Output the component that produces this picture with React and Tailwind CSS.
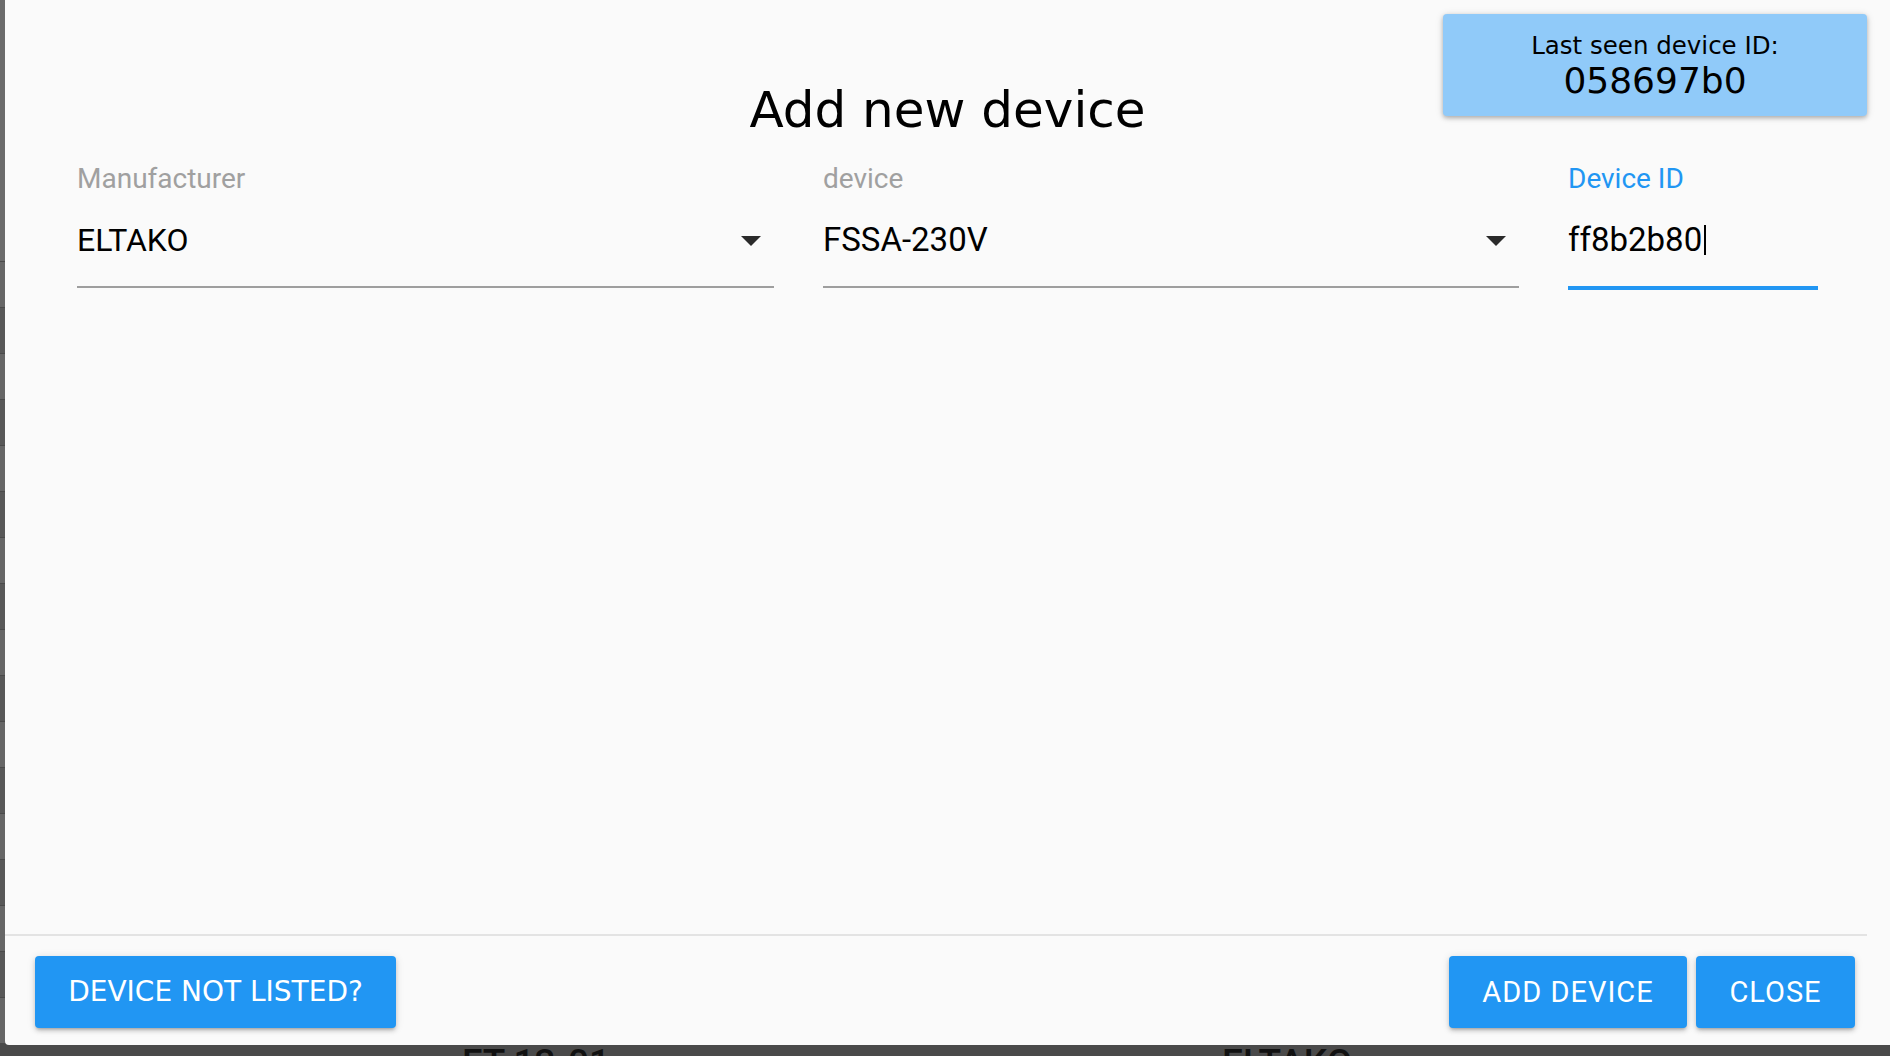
import React from "react";

const dejavu = { fontFamily: '"DejaVu Sans", "Liberation Sans", sans-serif' };
const roboto = { fontFamily: 'Roboto, "Liberation Sans", sans-serif' };

function Arrow() {
  return (
    <svg width="20" height="10" viewBox="0 0 20 10" className="shrink-0">
      <polygon points="0,0 20,0 10,10" fill="#2a2a2a" />
    </svg>
  );
}

export default function App() {
  const rows = Array.from({ length: 17 });
  return (
    <div className="relative w-[1890px] h-[1056px] overflow-hidden bg-[#4a4a4a]">
      {/* page behind the modal */}
      <div className="flex flex-col w-full">
        <div className="h-[261px] bg-[#6b6b6b]" />
        {rows.map((_, i) => (
          <div
            key={i}
            className={
              "h-[46px] border-t border-[#4a4a4a] " +
              (i % 2 === 0 ? "bg-[#666666]" : "bg-[#585858]")
            }
          />
        ))}
        <div className="relative h-[40px] bg-[#4a4a4a] text-[37px] font-medium text-[#111]" style={roboto}>
          <div className="flex pt-[2px]">
            <span className="ml-[462px] leading-[36px]">FT-13-01</span>
            <span className="ml-[612px] leading-[36px]">ELTAKO</span>
          </div>
        </div>
      </div>

      {/* modal dialog */}
      <div className="absolute left-[5px] top-0 w-[1885px] h-[1045px] bg-[#fafafa] rounded-bl-[4px] flex flex-col">
        {/* last seen badge */}
        <div
          className="absolute top-[14px] left-[1438px] w-[424px] h-[102px] rounded-[4px] bg-[#90caf9] shadow-[0_2px_4px_rgba(0,0,0,0.25),0_1px_8px_rgba(0,0,0,0.12)] flex flex-col items-center pt-[20px] text-black"
          style={dejavu}
        >
          <div className="text-[24.5px] leading-[24px]">Last seen device ID:</div>
          <div className="text-[36px] leading-[36px] mt-[5px]">058697b0</div>
        </div>

        <div className="pt-[86px] text-center text-black text-[50px] leading-[49px]" style={dejavu}>
          Add new device
        </div>

        <div
          className="mt-[30px] px-[72px] grid grid-cols-[697px_696px_250px] gap-x-[49px]"
          style={roboto}
        >
          <div className="flex flex-col">
            <div className="text-[28px] leading-[28px] text-[#a0a0a0]">Manufacturer</div>
            <div className="flex items-center h-[95px] border-b-2 border-[#9e9e9e]">
              <span className="text-[32px] leading-[32px] text-black">ELTAKO</span>
              <div className="ml-auto mr-[13px] flex items-center pt-[2px]">
                <Arrow />
              </div>
            </div>
          </div>
          <div className="flex flex-col">
            <div className="text-[28px] leading-[28px] text-[#a0a0a0]">device</div>
            <div className="flex items-center h-[95px] border-b-2 border-[#9e9e9e]">
              <span className="text-[33px] leading-[32px] text-black">FSSA-230V</span>
              <div className="ml-auto mr-[13px] flex items-center pt-[2px]">
                <Arrow />
              </div>
            </div>
          </div>
          <div className="flex flex-col">
            <div className="text-[28px] leading-[28px] text-[#2196f3]">Device ID</div>
            <div className="flex items-center h-[97px] border-b-4 border-[#2196f3]">
              <span className="text-[33px] leading-[32px] text-black">ff8b2b80</span>
              <span className="ml-[2px] w-[2px] h-[30px] bg-black" />
            </div>
          </div>
        </div>

        <div className="flex-1" />

        <div className="h-[2px] w-[1862px] bg-[#e3e3e3]" />

        <div className="flex items-center pt-[20px] pb-[17px] pl-[30px] pr-[35px]">
          <button
            className="h-[72px] w-[361px] rounded-[4px] bg-[#2196f3] text-white text-[28px] leading-[28px] shadow-[0_3px_3px_-2px_rgba(0,0,0,0.2),0_3px_4px_0_rgba(0,0,0,0.14),0_1px_8px_0_rgba(0,0,0,0.12)]"
            style={dejavu}
          >
            DEVICE NOT LISTED?
          </button>
          <div className="flex-1" />
          <button
            className="h-[72px] w-[238px] rounded-[4px] bg-[#2196f3] text-white text-[29px] leading-[29px] tracking-[1px] shadow-[0_3px_3px_-2px_rgba(0,0,0,0.2),0_3px_4px_0_rgba(0,0,0,0.14),0_1px_8px_0_rgba(0,0,0,0.12)]"
            style={roboto}
          >
            ADD DEVICE
          </button>
          <button
            className="ml-[9px] h-[72px] w-[159px] rounded-[4px] bg-[#2196f3] text-white text-[29px] leading-[29px] tracking-[1px] shadow-[0_3px_3px_-2px_rgba(0,0,0,0.2),0_3px_4px_0_rgba(0,0,0,0.14),0_1px_8px_0_rgba(0,0,0,0.12)]"
            style={roboto}
          >
            CLOSE
          </button>
        </div>
      </div>
    </div>
  );
}
